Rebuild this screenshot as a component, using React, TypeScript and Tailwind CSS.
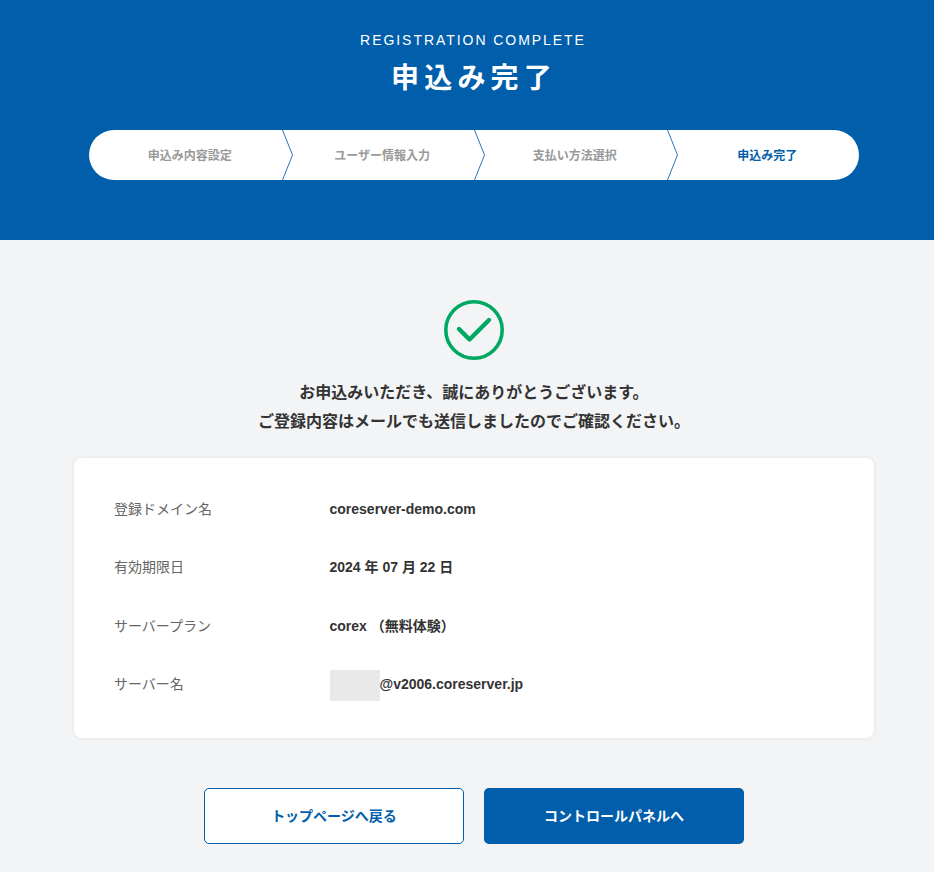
const FONT = "font-['Liberation_Sans','Noto_Sans_CJK_JP',sans-serif]";

const STEPS = ["申込み内容設定", "ユーザー情報入力", "支払い方法選択", "申込み完了"];

const DETAILS = [
  { label: "登録ドメイン名", value: "coreserver-demo.com" },
  { label: "有効期限日", value: "2024 年 07 月 22 日" },
  { label: "サーバープラン", value: "corex （無料体験）" },
];

function Chevron() {
  return (
    <svg className="absolute right-[-12px] top-0 z-10" width="12" height="50" viewBox="0 0 12 50" fill="none">
      <path d="M0.5 0 L10.5 25 L0.5 50" stroke="#2a74bd" strokeWidth="1" />
    </svg>
  );
}

function Stepper() {
  return (
    <ol className="mx-auto mt-[31px] grid h-[50px] w-[770px] grid-cols-4 rounded-[25px] bg-white">
      {STEPS.map((step, i) => (
        <li
          key={step}
          className={`relative flex items-center justify-center pl-[9px] pt-[2px] text-[12px] font-bold ${
            i === 3 ? "text-[#005eaa]" : "text-[#999999]"
          }`}
        >
          {step}
          {i < 3 && <Chevron />}
        </li>
      ))}
    </ol>
  );
}

function CheckIcon() {
  return (
    <svg width="60" height="60" viewBox="0 0 60 60" fill="none">
      <circle cx="30" cy="30" r="28.2" stroke="#00a862" strokeWidth="3.6" />
      <path
        d="M15 29 L25.5 39.5 L45 20"
        stroke="#00a862"
        strokeWidth="4.4"
        strokeLinecap="round"
        strokeLinejoin="round"
      />
    </svg>
  );
}

function DetailRow({ label, children }: { label: string; children: React.ReactNode }) {
  return (
    <div className="flex h-[58.33px] items-center">
      <div className="w-[215.5px] text-[14px] text-[#666666]">{label}</div>
      <div className="flex items-center text-[14px] font-bold text-[#333333]">{children}</div>
    </div>
  );
}

export default function App() {
  return (
    <div className={`min-h-[872px] overflow-hidden bg-[#f3f4f6] ${FONT}`}>
      <header className="h-[240px] bg-[#005eaa] pl-[14px] pt-[31px] text-center text-white">
        <p className="pr-[2px] text-[14px] leading-[18px] tracking-[1.95px]">REGISTRATION COMPLETE</p>
        <h1 className="mt-[10px] text-[28px] font-bold leading-[40px] tracking-[5.2px]">申込み完了</h1>
        <Stepper />
      </header>

      <main className="flex flex-col items-center pl-[14px] pt-[60px]">
        <CheckIcon />
        <p className="mt-[18px] text-center text-[16px] font-bold leading-[29px] text-[#333333]">
          お申込みいただき、誠にありがとうございます。
          <br />
          ご登録内容はメールでも送信しましたのでご確認ください。
        </p>

        <section className="mt-[22px] h-[280px] w-[800px] rounded-[8px] bg-white px-[40px] pt-[22.5px] shadow-[0_0_4px_rgba(0,0,0,0.08)]">
          {DETAILS.map((row) => (
            <DetailRow key={row.label} label={row.label}>
              {row.value}
            </DetailRow>
          ))}
          <DetailRow label="サーバー名">
            <span className="mt-[2px] h-[31px] w-[50px] bg-[#e9e9e9]" />
            @v2006.coreserver.jp
          </DetailRow>
        </section>

        <div className="mt-[50px] flex gap-[20px]">
          <button className="h-[56px] w-[260px] rounded-[5px] border border-[#005eaa] bg-white text-[14px] font-bold text-[#005eaa]">
            トップページへ戻る
          </button>
          <button className="h-[56px] w-[260px] rounded-[5px] bg-[#005eaa] text-[14px] font-bold text-white">
            コントロールパネルへ
          </button>
        </div>
      </main>
    </div>
  );
}
